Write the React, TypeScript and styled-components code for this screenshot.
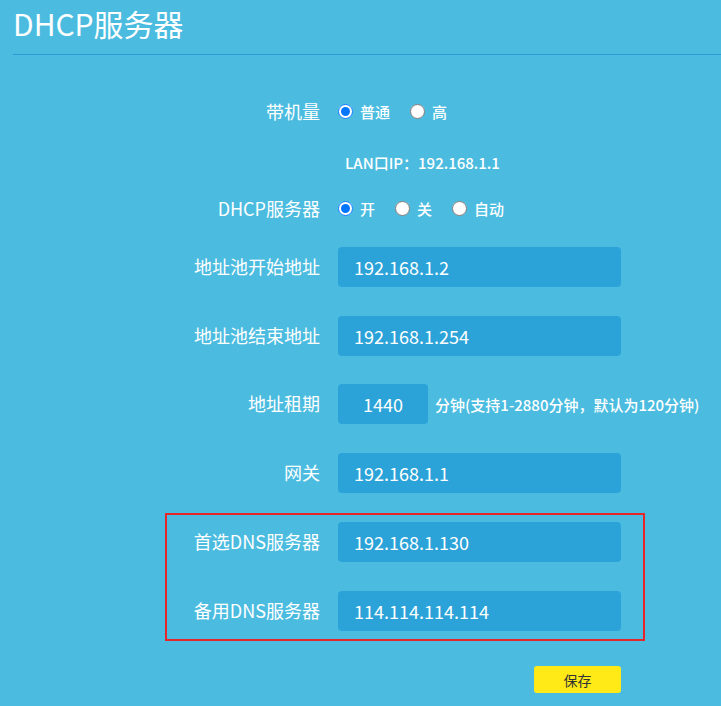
import React from "react";
import styled, { createGlobalStyle } from "styled-components";

const GlobalStyle = createGlobalStyle`
  html, body {
    margin: 0;
    padding: 0;
    background: #4bbce0;
  }
  body {
    font-family: "Noto Sans CJK SC", "Microsoft YaHei", sans-serif;
    color: #ffffff;
  }
  * { box-sizing: border-box; }
`;

const Page = styled.div`
  width: 721px;
  height: 706px;
  overflow: hidden;
  background: #4bbce0;
`;

const Header = styled.header`
  margin-left: 13px;
  padding: 5px 0 13px;
  border-bottom: 1px solid #2a9bd0;
`;

const Title = styled.h1`
  margin: 0;
  font-size: 30px;
  font-weight: 400;
  line-height: 36px;
  color: #ffffff;
`;

const Form = styled.form`
  display: flex;
  flex-direction: column;
  padding-top: 37px;
`;

const Row = styled.div<{ $mt?: number; $h?: number }>`
  display: flex;
  align-items: center;
  height: ${(p) => p.$h ?? 40}px;
  margin-top: ${(p) => p.$mt ?? 0}px;
`;

const Label = styled.div<{ $w?: number }>`
  width: ${(p) => p.$w ?? 320}px;
  flex-shrink: 0;
  margin-right: 18px;
  padding-bottom: 3px;
  text-align: right;
  font-size: 18px;
  line-height: 24px;
  white-space: nowrap;
`;

const Field = styled.input<{ $w?: number; $center?: boolean }>`
  width: ${(p) => p.$w ?? 283}px;
  height: 40px;
  border: none;
  outline: none;
  border-radius: 4px;
  background: #2ca3d8;
  color: #ffffff;
  font-family: inherit;
  font-size: 18px;
  padding: 0 16px;
  text-align: ${(p) => (p.$center ? "center" : "left")};
`;

const Hint = styled.span`
  margin-left: 7px;
  font-size: 15px;
  font-weight: 500;
  white-space: nowrap;
`;

const Note = styled.span`
  margin-left: 7px;
  font-size: 15px;
  font-weight: 500;
  white-space: nowrap;
`;

const RadioGroup = styled.div`
  display: flex;
  align-items: center;
  padding-bottom: 1px;
`;

const RadioOption = styled.label`
  display: flex;
  align-items: center;
  gap: 7px;
  margin-right: 20px;
  font-size: 15px;
  font-weight: 500;
  cursor: pointer;
`;

const Radio = styled.input`
  margin: 0;
  width: 15px;
  height: 15px;
`;

const Highlight = styled.div`
  margin: 20px 0 0 165px;
  width: 480px;
  border: 2px solid #e5262a;
  padding: 7px 0 8px;
  display: flex;
  flex-direction: column;
`;

const Actions = styled.div`
  width: 283px;
  display: flex;
  justify-content: flex-end;
`;

const SaveButton = styled.button`
  width: 87px;
  height: 27px;
  border: none;
  border-radius: 3px;
  background: #ffea18;
  color: #333333;
  font-family: inherit;
  font-size: 14px;
  padding: 0;
  cursor: pointer;
`;

export default function App() {
  return (
    <Page>
      <GlobalStyle />
      <Header>
        <Title>DHCP服务器</Title>
      </Header>
      <Form onSubmit={(e) => e.preventDefault()}>
        <Row>
          <Label>带机量</Label>
          <RadioGroup>
            <RadioOption>
              <Radio type="radio" name="load" defaultChecked />
              普通
            </RadioOption>
            <RadioOption>
              <Radio type="radio" name="load" />
              高
            </RadioOption>
          </RadioGroup>
        </Row>
        <Row $mt={20} $h={20}>
          <Label />
          <Note>LAN口IP：192.168.1.1</Note>
        </Row>
        <Row $mt={17}>
          <Label>DHCP服务器</Label>
          <RadioGroup>
            <RadioOption>
              <Radio type="radio" name="dhcp" defaultChecked />
              开
            </RadioOption>
            <RadioOption>
              <Radio type="radio" name="dhcp" />
              关
            </RadioOption>
            <RadioOption>
              <Radio type="radio" name="dhcp" />
              自动
            </RadioOption>
          </RadioGroup>
        </Row>
        <Row $mt={18}>
          <Label>地址池开始地址</Label>
          <Field defaultValue="192.168.1.2" />
        </Row>
        <Row $mt={29}>
          <Label>地址池结束地址</Label>
          <Field defaultValue="192.168.1.254" />
        </Row>
        <Row $mt={28}>
          <Label>地址租期</Label>
          <Field $w={90} $center defaultValue="1440" />
          <Hint>分钟(支持1-2880分钟，默认为120分钟)</Hint>
        </Row>
        <Row $mt={29}>
          <Label>网关</Label>
          <Field defaultValue="192.168.1.1" />
        </Row>
        <Highlight>
          <Row>
            <Label $w={153}>首选DNS服务器</Label>
            <Field defaultValue="192.168.1.130" />
          </Row>
          <Row $mt={29}>
            <Label $w={153}>备用DNS服务器</Label>
            <Field defaultValue="114.114.114.114" />
          </Row>
        </Highlight>
        <Row $mt={25} $h={27}>
          <Label />
          <Actions>
            <SaveButton type="submit">保存</SaveButton>
          </Actions>
        </Row>
      </Form>
    </Page>
  );
}
